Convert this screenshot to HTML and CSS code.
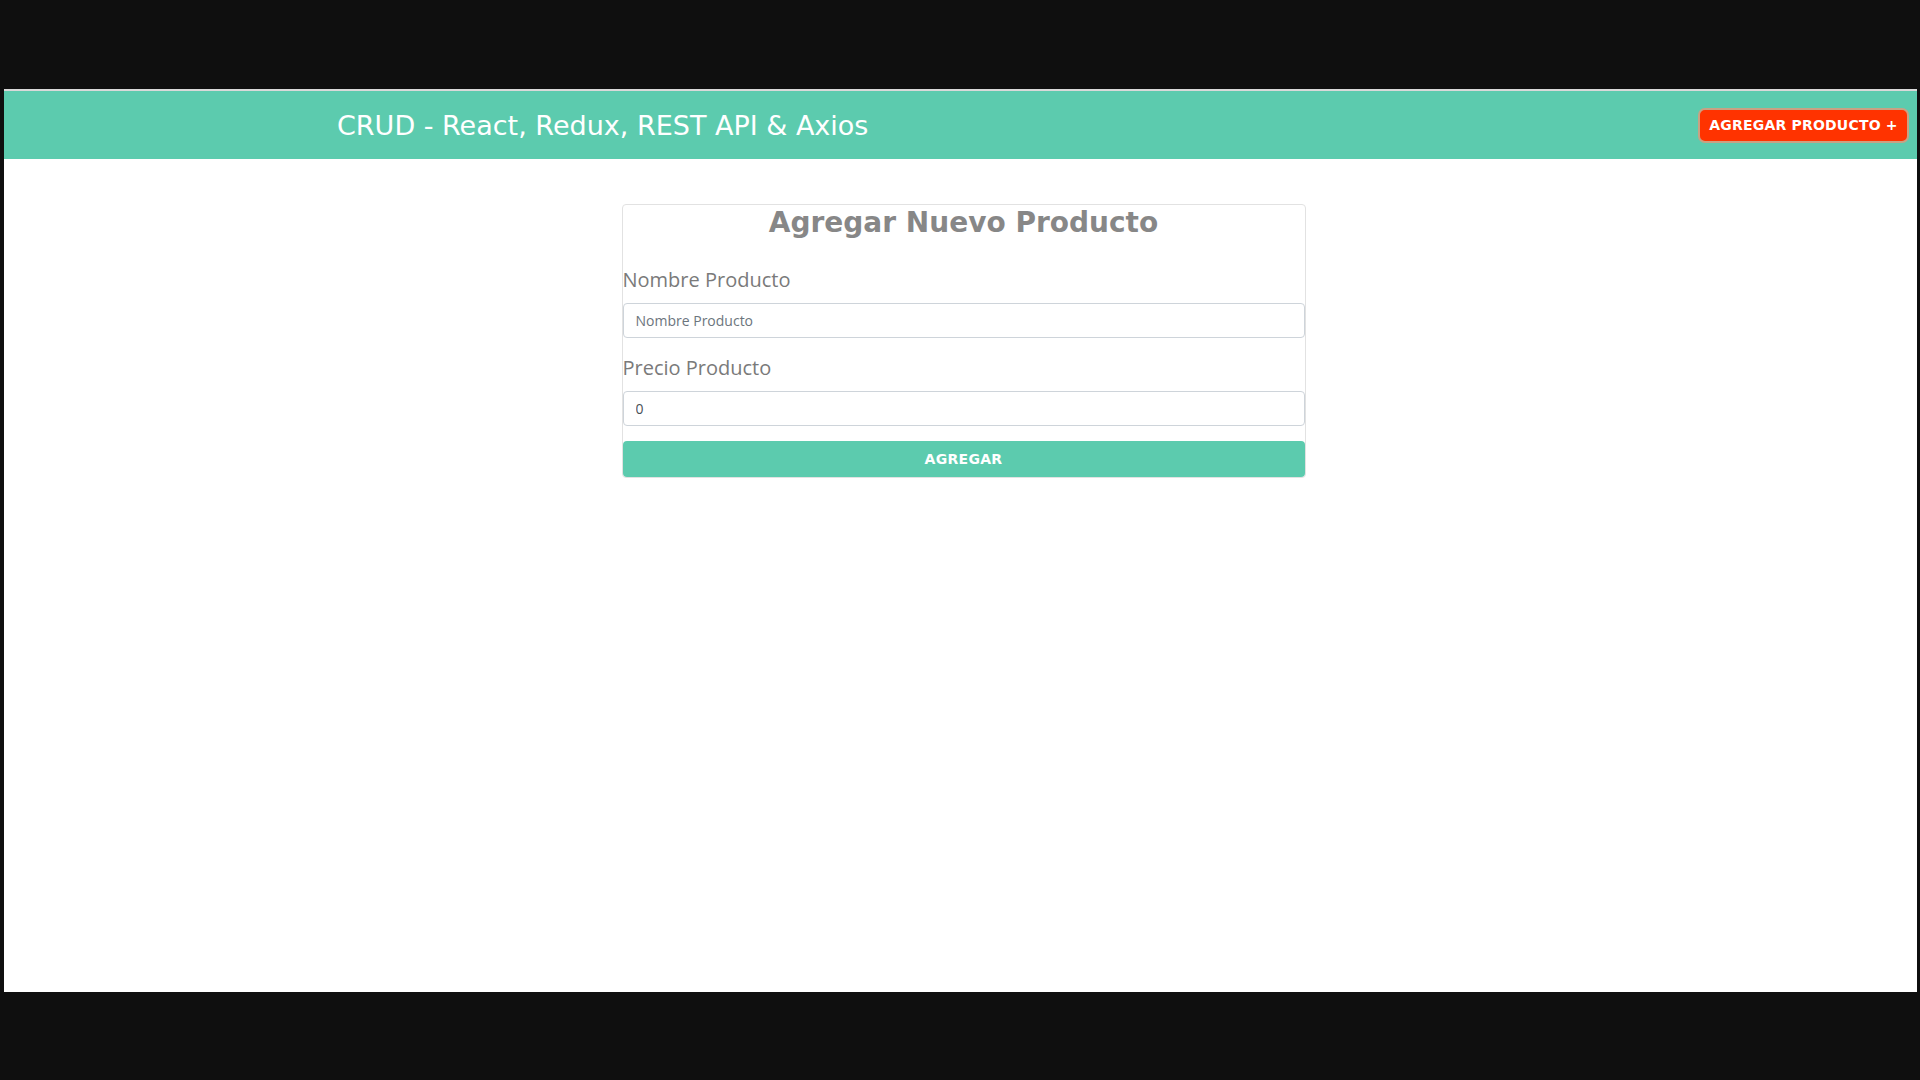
FILE: index.html
```html
<!DOCTYPE html>
<html lang="es">
<head>
<meta charset="utf-8">
<title>CRUD - React, Redux, REST API &amp; Axios</title>
<link rel="stylesheet" href="styles.css">
</head>
<body>
<div class="screen">
  <header class="navbar">
    <h1 class="brand">CRUD - React, Redux, REST API &amp; Axios</h1>
    <a class="btn-add" href="#">Agregar Producto +</a>
  </header>
  <main class="content">
    <div class="card">
      <h2 class="card-title">Agregar Nuevo Producto</h2>
      <form class="form">
        <div class="field">
          <label class="label">Nombre Producto</label>
          <input class="input" type="text" placeholder="Nombre Producto">
        </div>
        <div class="field field-last">
          <label class="label">Precio Producto</label>
          <input class="input" type="text" value="0">
        </div>
        <button class="btn-submit" type="button">Agregar</button>
      </form>
    </div>
  </main>
</div>
</body>
</html>
```
FILE: styles.css
```css
html, body {
  margin: 0;
  padding: 0;
  background: #0f0f0f;
  height: 1080px;
  overflow: hidden;
}
.screen {
  margin: 89px 0 0 4px;
  width: 1913px;
  height: 903px;
  background: #ffffff;
}
.navbar {
  box-sizing: border-box;
  height: 70px;
  border-top: 2px solid #d9d9d9;
  background: #5ccbae;
  display: flex;
  align-items: center;
  justify-content: space-between;
  padding: 0 8px 0 333px;
}
.brand {
  margin: 0;
  font-family: "DejaVu Sans", sans-serif;
  font-weight: normal;
  font-size: 27px;
  color: #ffffff;
  line-height: 1;
}
.btn-add {
  box-sizing: border-box;
  height: 35px;
  width: 211px;
  display: flex;
  align-items: center;
  justify-content: center;
  background: #ff3300;
  border: 2px solid #c9a183;
  border-radius: 7px;
  color: #ffffff;
  text-decoration: none;
  text-transform: uppercase;
  font-family: "DejaVu Sans", sans-serif;
  font-weight: bold;
  font-size: 14px;
  letter-spacing: 0.2px;
}
.content {
  display: flex;
  justify-content: center;
  padding: 45px 0 0 6px;
}
.card {
  box-sizing: border-box;
  width: 684px;
  border: 1px solid #e2e2e2;
  border-radius: 4px;
}
.card-title {
  margin: 0;
  text-align: center;
  font-family: "DejaVu Sans", sans-serif;
  font-weight: bold;
  font-size: 28px;
  color: #878787;
  line-height: 30px;
  padding-top: 3px;
}
.form {
  display: flex;
  flex-direction: column;
  margin-top: 28px;
}
.field {
  display: flex;
  flex-direction: column;
  margin-bottom: 16px;
}
.field-last {
  margin-bottom: 15px;
}
.label {
  font-family: "Open Sans", sans-serif;
  font-size: 20px;
  color: #7a7a7a;
  line-height: 28px;
  margin-bottom: 9px;
}
.input {
  box-sizing: border-box;
  height: 35px;
  width: 100%;
  border: 1px solid #ced4da;
  border-radius: 4px;
  padding: 0 12px;
  font-family: "Open Sans", sans-serif;
  font-size: 14px;
  color: #495057;
  margin: 0;
}
.input::placeholder {
  color: #6c757d;
}
.btn-submit {
  box-sizing: border-box;
  height: 36px;
  width: 100%;
  border: none;
  border-radius: 4px;
  background: #5ccbae;
  color: #ffffff;
  text-transform: uppercase;
  font-family: "DejaVu Sans", sans-serif;
  font-weight: bold;
  font-size: 14px;
  letter-spacing: 0.3px;
  margin: 0;
}
```
